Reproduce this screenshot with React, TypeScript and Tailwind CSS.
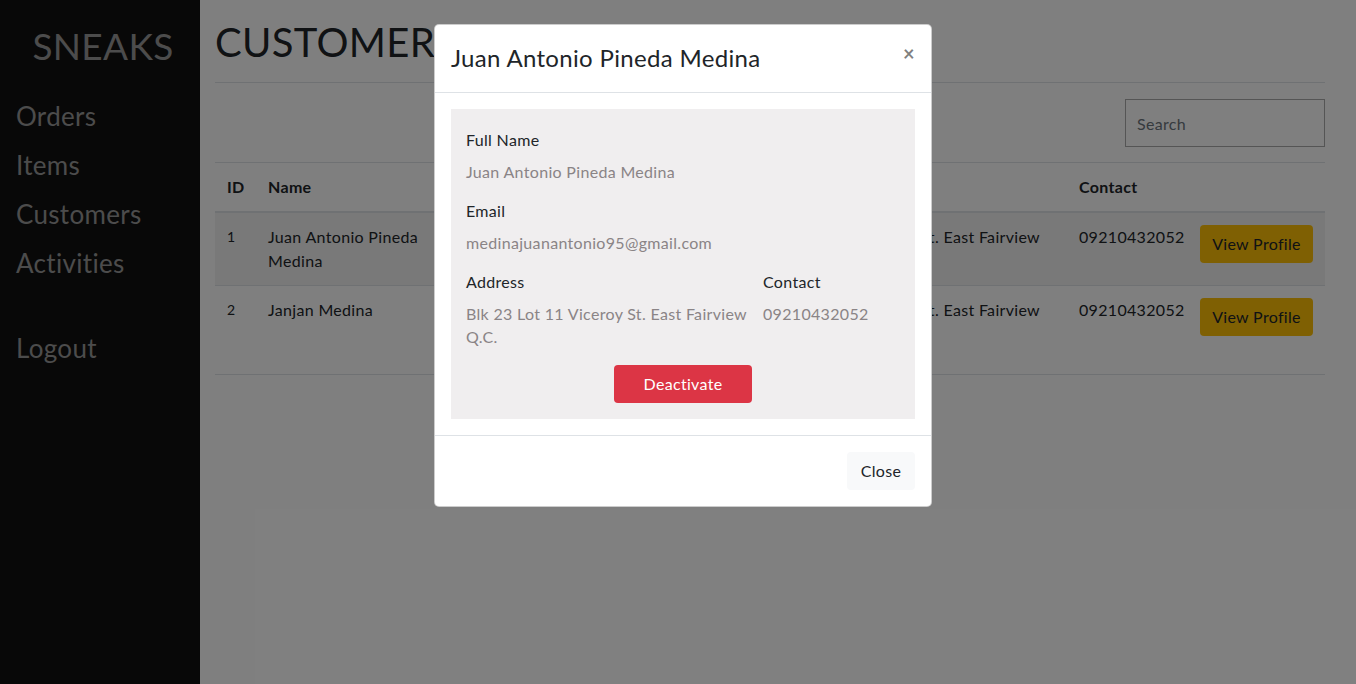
import React from "react";

const customers = [
  {
    id: 1,
    name: "Juan Antonio Pineda Medina",
    email: "medinajuanantonio95@gmail.com",
    address: "Blk 23 Lot 11 Viceroy St. East Fairview Q.C.",
    contact: "09210432052",
  },
  {
    id: 2,
    name: "Janjan Medina",
    email: "janjanmedina@gmail.com",
    address: "Blk 23 Lot 11 Viceroy St. East Fairview Q.C.",
    contact: "09210432052",
  },
];

function Sidebar() {
  return (
    <aside className="w-[200px] shrink-0 bg-[#111] text-[#989898] min-h-[684px]">
      <div className="pt-[22px] text-center text-[37px] leading-[48px] pl-[6px]">SNEAKS</div>
      <nav className="mt-[22px] flex flex-col pl-[16px] text-[26px] leading-[49px]">
        <a>Orders</a>
        <a>Items</a>
        <a>Customers</a>
        <a>Activities</a>
        <a className="mt-[36px]">Logout</a>
      </nav>
    </aside>
  );
}

function CustomerTable() {
  return (
    <table className="w-[1110px] table-fixed border-collapse text-[16px] leading-6 text-[#212529]">
      <colgroup>
        <col className="w-[41px]" />
        <col className="w-[189px]" />
        <col className="w-[302px]" />
        <col className="w-[320px]" />
        <col className="w-[121px]" />
        <col className="w-[137px]" />
      </colgroup>
      <thead>
        <tr className="border-t border-[#dee2e6] border-b-2">
          <th className="px-3 py-3 text-left font-bold">ID</th>
          <th className="px-3 py-3 text-left font-bold">Name</th>
          <th className="px-3 py-3 text-left font-bold">Email</th>
          <th className="px-3 py-3 text-left font-bold">Address</th>
          <th className="px-3 py-3 text-left font-bold">Contact</th>
          <th className="px-3 py-3"></th>
        </tr>
      </thead>
      <tbody>
        {customers.map((c, i) => (
          <tr
            key={c.id}
            className={`border-b border-[#dee2e6] align-top ${
              i % 2 === 0 ? "bg-[#f2f2f2] h-[73px]" : "h-[89px]"
            }`}
          >
            <td className="px-3 py-3 text-[14px]">{c.id}</td>
            <td className="px-3 py-3">{c.name}</td>
            <td className="px-3 py-3">{c.email}</td>
            <td className="px-3 py-3">{c.address}</td>
            <td className="px-3 py-3">{c.contact}</td>
            <td className="px-3 py-3">
              <button className="h-[38px] w-[113px] rounded bg-[#ffc107] text-[16px] text-[#212529]">
                View Profile
              </button>
            </td>
          </tr>
        ))}
      </tbody>
    </table>
  );
}

function ProfileModal() {
  const c = customers[0];
  return (
    <div className="absolute left-[434px] top-[24px] w-[498px] rounded-[5px] border border-black/20 bg-white text-[#212529]">
      <div className="flex items-start justify-between border-b border-[#dee2e6] px-4 pt-[15px] pb-4">
        <h5 className="text-[24px] leading-9 font-normal">{c.name}</h5>
        <button className="mt-[1px] text-[20px] leading-6 font-bold text-black/50">×</button>
      </div>
      <div className="p-4">
        <div className="bg-[#f0eeef] px-[15px] pt-[19px] pb-[16px]">
          <p className="leading-6">Full Name</p>
          <p className="mt-2 leading-6 text-[#8a8486]">{c.name}</p>
          <p className="mt-[15px] leading-6">Email</p>
          <p className="mt-2 leading-6 text-[#8a8486]">{c.email}</p>
          <div className="mt-[15px] flex gap-[15px]">
            <div className="w-[282px]">
              <p className="leading-6">Address</p>
              <p className="mt-2 leading-[23px] text-[#8a8486]">{c.address}</p>
            </div>
            <div>
              <p className="leading-6">Contact</p>
              <p className="mt-2 leading-[23px] text-[#8a8486]">{c.contact}</p>
            </div>
          </div>
          <div className="mt-[17px] flex justify-center">
            <button className="h-[38px] w-[138px] rounded bg-[#dc3545] text-white">Deactivate</button>
          </div>
        </div>
      </div>
      <div className="flex justify-end border-t border-[#dee2e6] px-4 pt-[16px] pb-4">
        <button className="h-[38px] w-[68px] rounded bg-[#f8f9fa] text-[#212529]">Close</button>
      </div>
    </div>
  );
}

export default function App() {
  return (
    <div
      className="relative h-[684px] w-[1356px] overflow-hidden bg-white tracking-[0.02em]"
      style={{ fontFamily: "Lato, 'Open Sans', sans-serif" }}
    >
      <div className="flex">
        <Sidebar />
        <main className="flex-1 pl-[15px]">
          <h1 className="pt-[18px] text-[40px] leading-[48px] text-[#212529]">CUSTOMERS</h1>
          <hr className="mt-[16px] w-[1110px] border-t border-[#dee2e6]" />
          <div className="flex w-[1110px] justify-end pt-4 pb-[15px]">
            <input
              placeholder="Search"
              className="h-[48px] w-[200px] border border-[#aaa] px-[11px] text-[16px] placeholder-[#6c757d] outline-none"
            />
          </div>
          <CustomerTable />
        </main>
      </div>
      <div className="absolute inset-0 bg-black/50" />
      <ProfileModal />
    </div>
  );
}
